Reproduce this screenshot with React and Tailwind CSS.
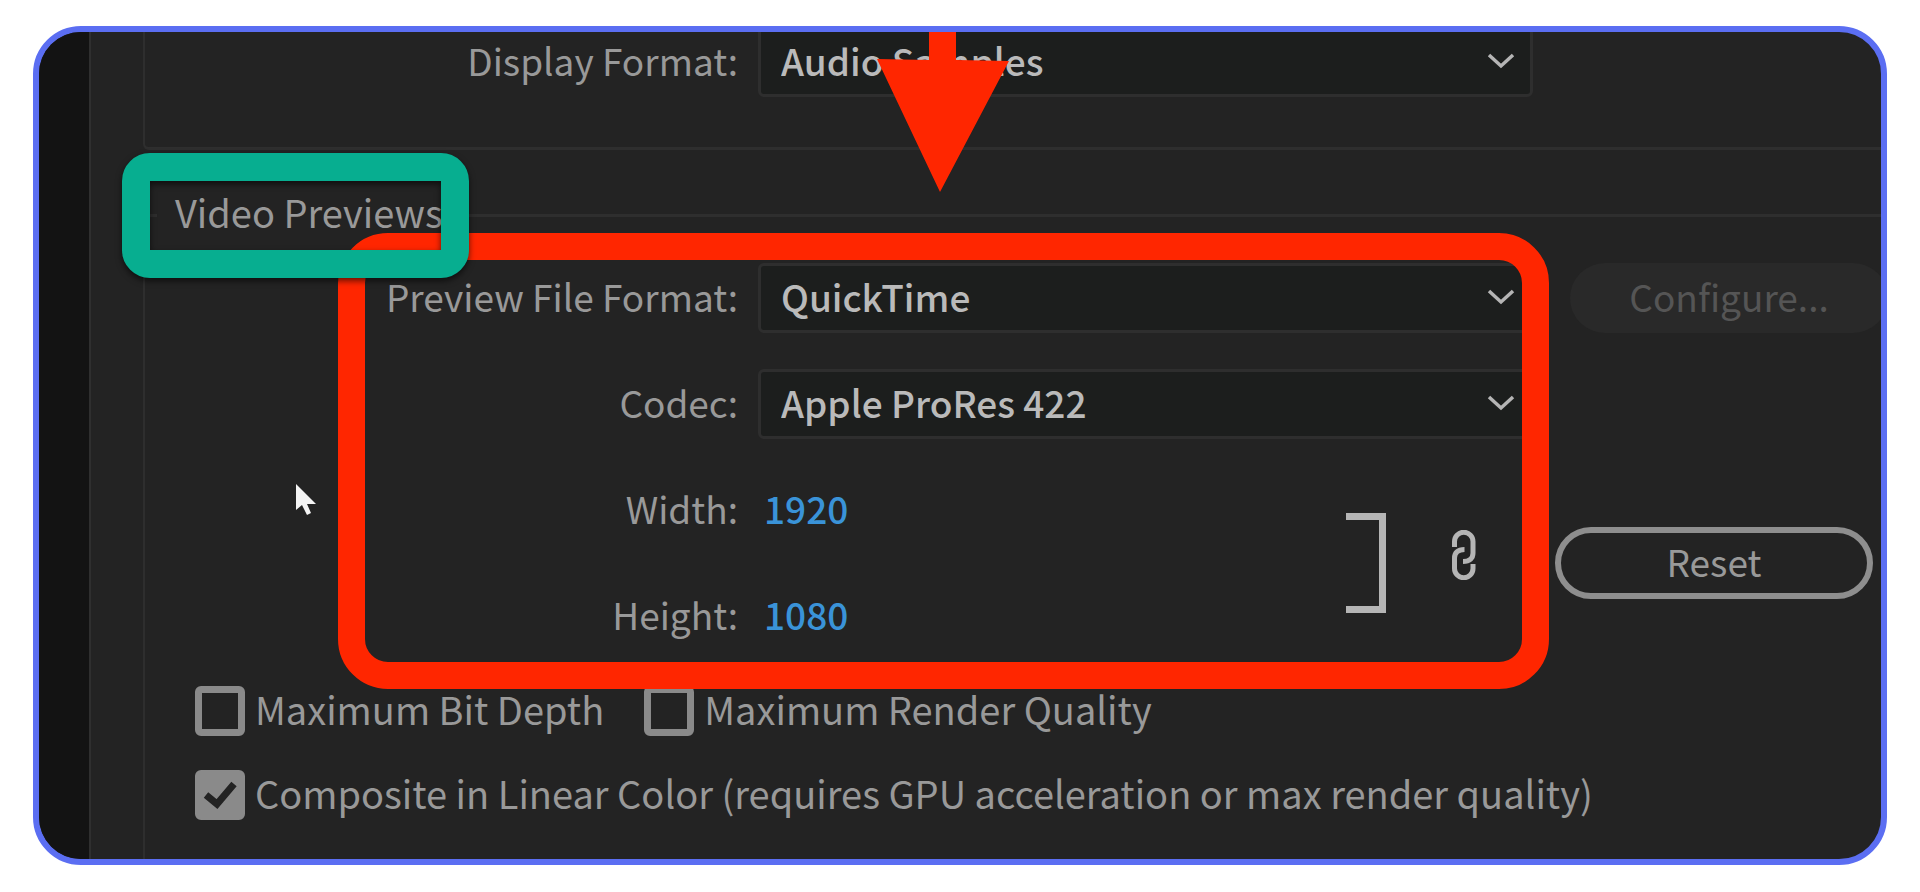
import { useState } from 'react'

function SelectField({ id, value, options, onChange }) {
  return (
    <div className="relative ml-5 w-[775px] shrink-0">
      <select
        id={id}
        value={value}
        onChange={(e) => onChange(e.target.value)}
        className="block h-[70px] w-full appearance-none rounded-md border-3 border-[#2e2e2e] bg-[#1c1e1d] pb-1 pl-5 pr-16 font-medium text-[#bababa] outline-none"
      >
        {options.map((o) => (
          <option key={o}>{o}</option>
        ))}
      </select>
      <svg className="pointer-events-none absolute right-[18px] top-[26px] h-4 w-7" viewBox="0 0 28 16" fill="none" stroke="#b5b5b5" strokeWidth="3.5">
        <path d="M2 2l12 11L26 2" />
      </svg>
    </div>
  )
}

function FieldRow({ id, label, children }) {
  return (
    <div className="flex h-[70px] items-center">
      <label htmlFor={id} className="w-[593px] shrink-0 whitespace-nowrap pb-1 text-right">{label}</label>
      {children}
    </div>
  )
}

function NumberField({ id, value, onChange }) {
  return (
    <input
      id={id}
      value={value}
      onChange={(e) => onChange(e.target.value)}
      className="ml-[26px] w-40 bg-transparent pb-1 font-medium text-[#3a93d8] outline-none"
    />
  )
}

function CheckField({ label, checked, onChange }) {
  return (
    <label className="flex h-14 items-center gap-2.5 whitespace-nowrap">
      <span className="relative block h-[50px] w-[50px]">
        <input
          type="checkbox"
          checked={checked}
          onChange={(e) => onChange(e.target.checked)}
          className="block h-full w-full appearance-none rounded-md border-7 border-[#8a8a8a] checked:bg-[#8a8a8a]"
        />
        {checked && (
          <svg className="pointer-events-none absolute inset-0 h-full w-full" viewBox="0 0 50 50" fill="none" stroke="#232323" strokeWidth="7">
            <path d="M11 25l11 9L39 14" />
          </svg>
        )}
      </span>
      <span className="pb-1">{label}</span>
    </label>
  )
}

export default function App() {
  const [display, setDisplay] = useState('Audio Samples')
  const [format, setFormat] = useState('QuickTime')
  const [codec, setCodec] = useState('Apple ProRes 422')
  const [width, setWidth] = useState('1920')
  const [height, setHeight] = useState('1080')
  const [depth, setDepth] = useState(false)
  const [quality, setQuality] = useState(false)
  const [linear, setLinear] = useState(true)

  return (
    <div className="min-h-screen bg-white px-[33px] pb-7 pt-[26px] font-['Noto_Sans_CJK_SC',sans-serif] text-[37px] leading-[56px] text-[#999999]">
      <div className="relative flex overflow-hidden rounded-[48px] border-6 border-[#5b6ef2] bg-[#232323]">
        <div className="w-[52px] shrink-0 border-r-2 border-[#2f2f2f] bg-[#131313]" />

        <main className="min-w-0 flex-1 pl-[52px]">
          <section className="-mr-2 flex h-[118px] flex-col rounded-bl-md border-b-3 border-l-2 border-[#2e2e2e]">
            <div className="-mt-[5px]">
              <FieldRow id="display" label="Display Format:">
                <SelectField id="display" value={display} options={['Audio Samples', 'Milliseconds']} onChange={setDisplay} />
              </FieldRow>
            </div>
          </section>

          <section className="relative -mr-2 mt-16 border-l-2 border-t-3 border-[#2e2e2e] pb-9">
            <h2 className="absolute -top-[33px] left-3 bg-[#232323] px-[18px] text-[38px]">Video Previews</h2>

            <div className="flex flex-col gap-9 pt-[46px]">
              <div className="flex items-center">
                <FieldRow id="format" label="Preview File Format:">
                  <SelectField id="format" value={format} options={['QuickTime', 'I-Frame Only MPEG']} onChange={setFormat} />
                </FieldRow>
                <button disabled className="ml-[37px] h-[70px] w-[318px] shrink-0 rounded-full bg-[#292929] pb-1 text-[#555555]">
                  Configure...
                </button>
              </div>
              <FieldRow id="codec" label="Codec:">
                <SelectField id="codec" value={codec} options={['Apple ProRes 422', 'Apple ProRes 4444']} onChange={setCodec} />
              </FieldRow>
              <div className="flex items-center">
                <div className="flex flex-col gap-9">
                  <FieldRow id="width" label="Width:">
                    <NumberField id="width" value={width} onChange={setWidth} />
                  </FieldRow>
                  <FieldRow id="height" label="Height:">
                    <NumberField id="height" value={height} onChange={setHeight} />
                  </FieldRow>
                </div>
                <div className="ml-[422px] h-[100px] w-10 border-y-7 border-r-7 border-[#b5b5b5]" />
                <button aria-label="Link width and height" className="ml-[66px] pb-4">
                  <svg className="h-[50px] w-6" viewBox="0 0 24 50" fill="none" stroke="#b5b5b5" strokeWidth="5">
                    <path d="M2.500 17v-5.500a9 9 0 0 1 18.500 0V23c0 5-3 8.500-10 8.500" />
                    <path d="M21 34v4.500a9 9 0 0 1-18.500 0V28c0-5 3-8.500 10-8.500" />
                  </svg>
                </button>
                <button className="ml-[79px] h-[72px] w-[318px] shrink-0 rounded-full border-6 border-[#8e8e8e] pb-1">
                  Reset
                </button>
              </div>
            </div>

            <div className="flex flex-col gap-7 pl-[50px] pt-8 text-[38px]">
              <div className="flex gap-10">
                <CheckField label="Maximum Bit Depth" checked={depth} onChange={setDepth} />
                <CheckField label="Maximum Render Quality" checked={quality} onChange={setQuality} />
              </div>
              <CheckField label="Composite in Linear Color (requires GPU acceleration or max render quality)" checked={linear} onChange={setLinear} />
            </div>
          </section>
        </main>

        {/* annotations drawn over the dialog */}
        <div className="pointer-events-none absolute left-[299px] top-[201px] h-[456px] w-[1211px] rounded-[50px] border-[27px] border-[#ff2600]" />
        <svg className="pointer-events-none absolute left-[838px] top-0 h-[160px] w-[132px]" viewBox="0 0 132 160" fill="#ff2600">
          <path d="M52 0h27v28l53 1-69 131L0 27l52 1z" />
        </svg>
        <div className="pointer-events-none absolute left-[83px] top-[121px] h-[125px] w-[347px] rounded-[28px] border-28 border-[#07ae90] drop-shadow-[0_3px_3px_rgba(0,0,0,0.6)]" />
        <svg className="pointer-events-none absolute left-[257px] top-[452px] h-[32px] w-[22px]" viewBox="0 0 22 32" fill="#f4f4f4">
          <path d="M0 0v26l6-5 5 10 4-2-4-9h9z" />
        </svg>
      </div>
    </div>
  )
}
